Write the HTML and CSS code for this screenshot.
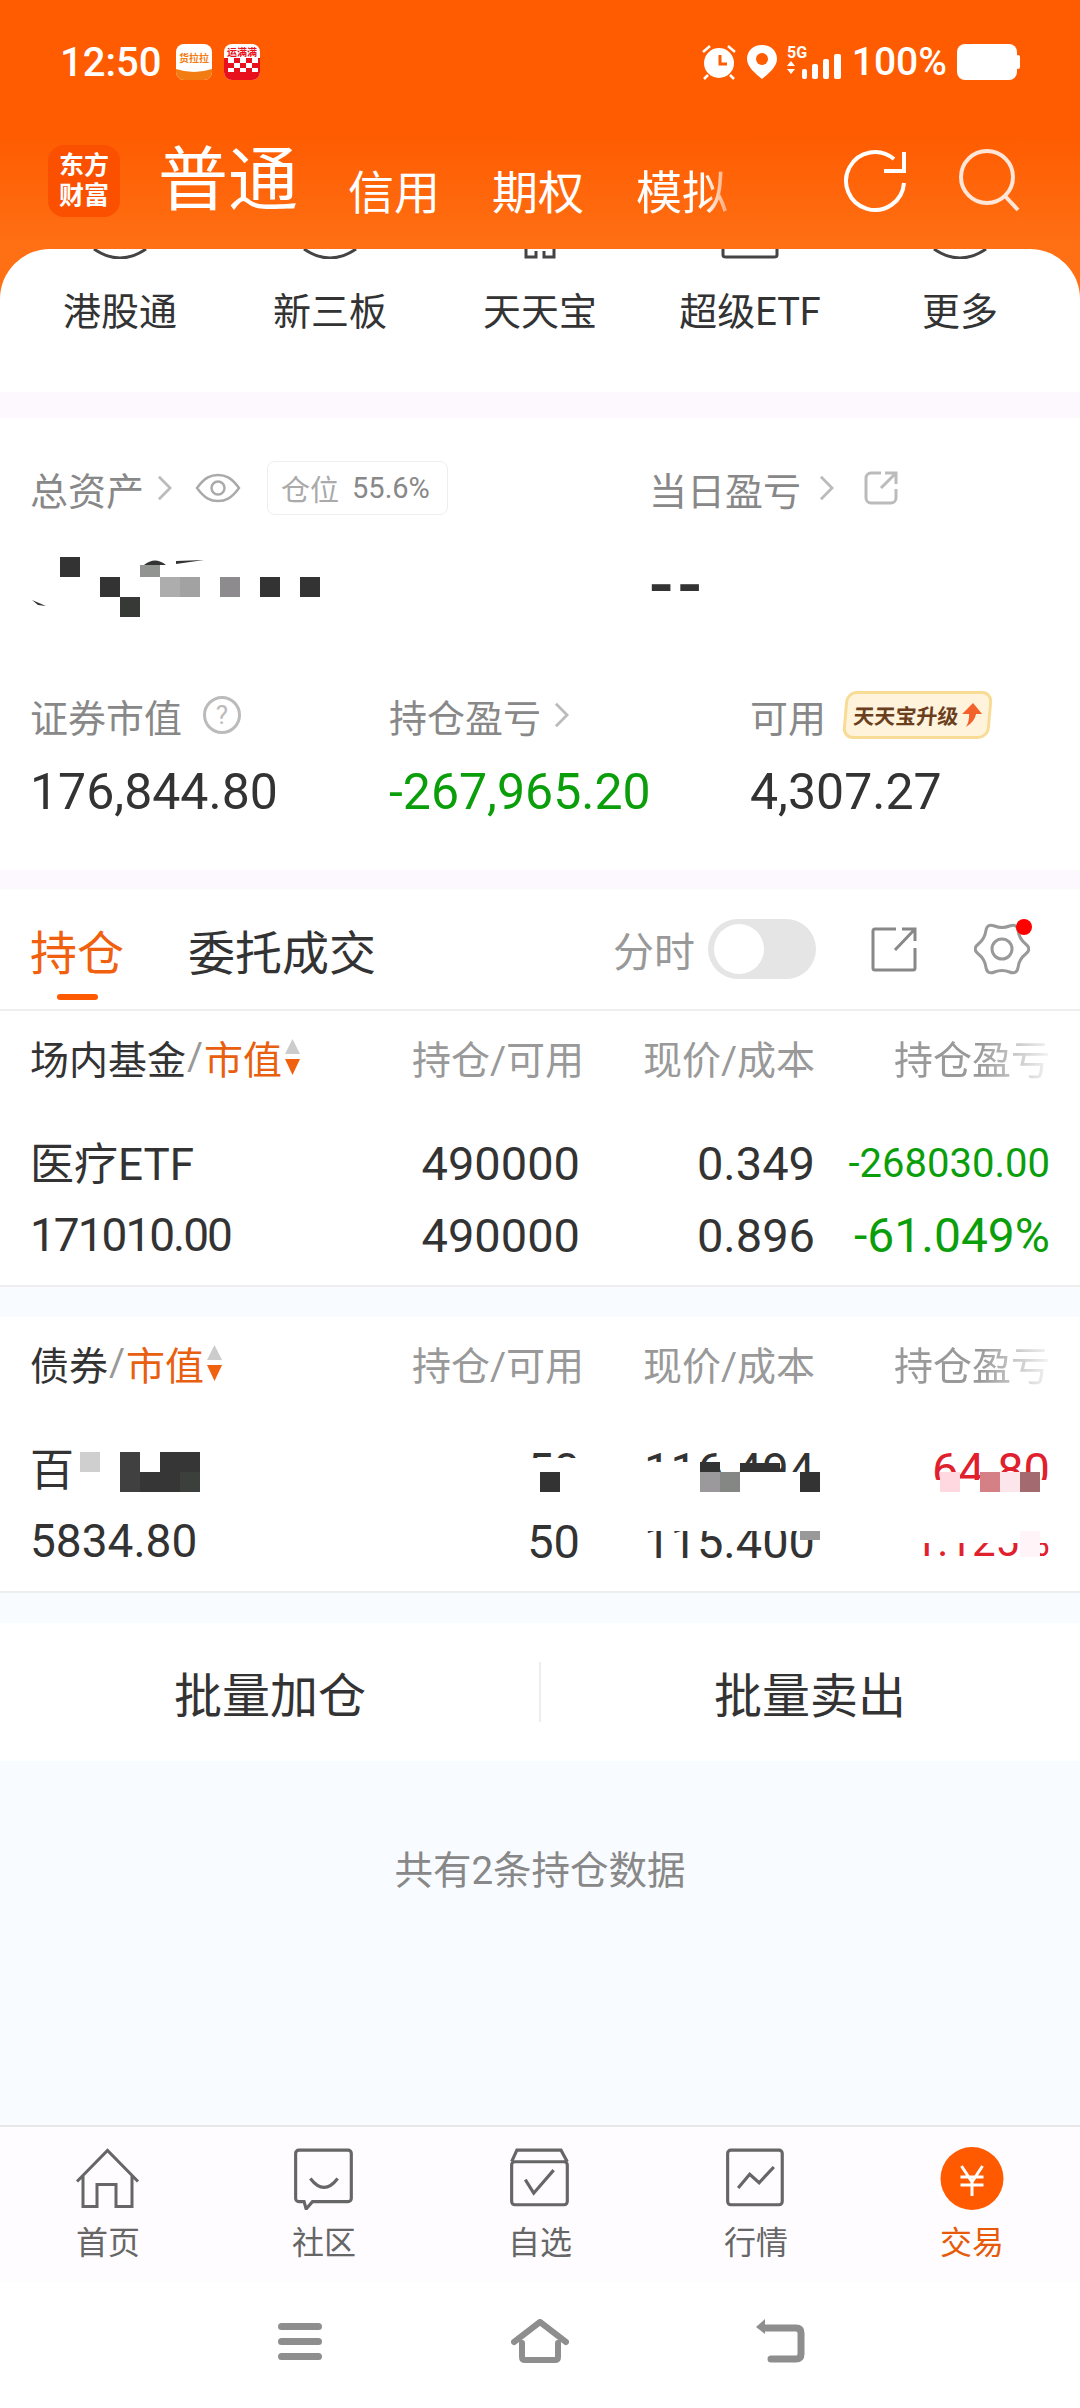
FILE: index.html
```html
<!DOCTYPE html>
<html lang="zh-CN">
<head>
    <meta charset="UTF-8">
    <meta name="viewport" content="width=device-width, initial-scale=1.0">
    <title>交易</title>
    <link rel="stylesheet" href="styles.css">
</head>
<body>
    <svg class="defs" width="0" height="0">
        <symbol id="chevron" viewBox="0 0 16 28"><path d="M2 2 L14 14 L2 26" fill="none" stroke="currentColor" stroke-width="3"/></symbol>
        <symbol id="export" viewBox="0 0 46 46"><path d="M25 3 H4 a2 2 0 0 0 -2 2 V42 a2 2 0 0 0 2 2 H42 a2 2 0 0 0 2 -2 V22 M24 24 L44 3 M31 3 H44 V15" fill="none" stroke="currentColor" stroke-width="3"/></symbol>
        <symbol id="export-round" viewBox="0 0 34 34"><path d="M17 2 H7 a5 5 0 0 0 -5 5 V27 a5 5 0 0 0 5 5 H27 a5 5 0 0 0 5 -5 V18 M17 17 L31 3 M21 2 H32 V13" fill="none" stroke="currentColor" stroke-width="3"/></symbol>
        <symbol id="sort" viewBox="0 0 17 36"><path d="M8.500 0 L16 15 H1 Z" fill="#ccc"/><path d="M1 20 H16 L8.500 36 Z" fill="#f0600f"/></symbol>
    </svg>

    <div class="screen">
        <header class="top">
            <div class="status">
                <span class="clock">12:50</span>
                <svg class="note" viewBox="0 0 36 36">
                    <rect width="36" height="36" rx="8" fill="#fff"/>
                    <path d="M0 25 Q18 31 36 25 V28 a8 8 0 0 1 -8 8 H8 a8 8 0 0 1 -8 -8 Z" fill="#f27c12"/>
                    <text x="18" y="18" class="note-txt" fill="#f27c12">货拉拉</text>
                </svg>
                <svg class="note" viewBox="0 0 36 36">
                    <rect width="36" height="36" rx="8" fill="#fff"/>
                    <path d="M0 14 H36 V28 a8 8 0 0 1 -8 8 H8 a8 8 0 0 1 -8 -8 Z" fill="#e8101c"/>
                    <path d="M4 14 h6 v5 h-6 Z M16 14 h6 v5 h-6 Z M28 14 h6 v5 h-6 Z M10 19 h6 v5 h-6 Z M22 19 h6 v5 h-6 Z M4 24 h6 v4 h-6 Z M16 24 h6 v4 h-6 Z M28 24 h6 v4 h-6 Z" fill="#fff"/>
                    <text x="18" y="12" class="note-txt" fill="#e8101c">运满满</text>
                </svg>
                <div class="status-right">
                    <svg class="st-alarm" viewBox="0 0 36 38">
                        <circle cx="18" cy="20" r="15" fill="#fff"/>
                        <path d="M19 12 V21 H26" fill="none" stroke="#ff5b00" stroke-width="3"/>
                        <path d="M2 9 L9 3 M34 9 L27 3 M7 32 L3 36 M29 32 L33 36" stroke="#fff" stroke-width="2.500"/>
                    </svg>
                    <svg class="st-pin" viewBox="0 0 30 34">
                        <path d="M15 0 C6 0 0 6 0 14 C0 22 9 29 15 34 C21 29 30 22 30 14 C30 6 24 0 15 0 Z" fill="#fff"/>
                        <circle cx="15" cy="14" r="6" fill="#ff5b00"/>
                    </svg>
                    <svg class="st-signal" viewBox="0 0 54 36">
                        <text x="0" y="14" class="st-5g">5G</text>
                        <path d="M4 17 L8 22 H0 Z M0 25 H8 L4 30 Z" fill="#fff"/>
                        <rect x="15" y="25" width="5" height="10" rx="2" fill="#fff"/>
                        <rect x="25" y="20" width="6" height="15" rx="2" fill="#fff"/>
                        <rect x="36" y="15" width="6" height="20" rx="2" fill="#fff"/>
                        <rect x="47" y="10" width="7" height="25" rx="2" fill="#fff"/>
                    </svg>
                    <span class="battery-pct">100%</span>
                    <svg class="st-battery" viewBox="0 0 63 36">
                        <rect width="60" height="36" rx="8" fill="#fff"/>
                        <rect x="59" y="11" width="4" height="14" rx="2" fill="#fff"/>
                    </svg>
                </div>
            </div>

            <nav class="account-tabs">
                <div class="logo">东方<br>财富</div>
                <span class="tab-main">普通</span>
                <span class="tab">信用</span>
                <span class="tab">期权</span>
                <span class="tab tab-fade">模拟</span>
                <div class="top-actions">
                    <svg class="ic-refresh" viewBox="0 0 66 64"><path d="M52 10 A29 29 0 1 0 62 34 M42 22 H62 V3" fill="none" stroke="#fff" stroke-width="4"/></svg>
                    <svg class="ic-search" viewBox="0 0 62 66"><circle cx="29" cy="29" r="26" fill="none" stroke="#ffe6d8" stroke-width="4"/><path d="M47 48 L60 62" stroke="#ffe6d8" stroke-width="4"/></svg>
                </div>
            </nav>

            <div class="shortcuts">
                <div class="shortcut"><svg class="peek" viewBox="0 0 60 10"><path d="M4 0 Q30 18 56 0" fill="none" stroke="#444" stroke-width="3"/></svg><span>港股通</span></div>
                <div class="shortcut"><svg class="peek" viewBox="0 0 60 10"><path d="M4 0 Q30 18 56 0" fill="none" stroke="#444" stroke-width="3"/></svg><span>新三板</span></div>
                <div class="shortcut"><svg class="peek" viewBox="0 0 60 10"><path d="M16 0 V8 H26 V2 M34 2 V8 H44 V0" fill="none" stroke="#444" stroke-width="3"/></svg><span>天天宝</span></div>
                <div class="shortcut"><svg class="peek" viewBox="0 0 60 10"><path d="M3 0 V6 Q3 8 6 8 H54 Q57 8 57 6 V0" fill="none" stroke="#444" stroke-width="3"/></svg><span>超级ETF</span></div>
                <div class="shortcut"><svg class="peek" viewBox="0 0 60 10"><path d="M4 0 Q30 18 56 0" fill="none" stroke="#444" stroke-width="3"/></svg><span>更多</span></div>
            </div>
        </header>

        <div class="strip strip-pink strip-first"></div>

        <section class="assets">
            <div class="assets-top">
                <div>
                    <div class="label-row">
                        <span>总资产</span>
                        <svg class="chev"><use href="#chevron"/></svg>
                        <svg class="ic-eye" viewBox="0 0 46 30">
                            <path d="M2 15 C10 4 16 2 23 2 C30 2 36 4 44 15 C36 26 30 28 23 28 C16 28 10 26 2 15 Z" fill="none" stroke="#aaa" stroke-width="2.500"/>
                            <circle cx="23" cy="15" r="6.500" fill="none" stroke="#aaa" stroke-width="2.500"/>
                        </svg>
                        <div class="pill"><span class="pill-name">仓位</span><span>55.6%</span></div>
                    </div>
                    <svg class="mosaic-total" viewBox="0 0 320 100">
                        <rect x="60" y="7" width="20" height="20" fill="#333"/>
                        <rect x="100" y="27" width="20" height="20" fill="#333"/>
                        <rect x="120" y="47" width="20" height="20" fill="#363936"/>
                        <rect x="140" y="15" width="20" height="12" fill="#929492"/>
                        <rect x="160" y="27" width="20" height="20" fill="#adadad"/>
                        <rect x="180" y="27" width="20" height="20" fill="#a3a2a3"/>
                        <rect x="220" y="27" width="20" height="20" fill="#8d8b8d"/>
                        <rect x="260" y="27" width="20" height="20" fill="#333"/>
                        <rect x="300" y="27" width="20" height="20" fill="#333"/>
                        <path d="M144 15 Q155 6 166 15 Z M176 11 L204 10 L176 14 Z M32 50 L46 56 L38 55 Z" fill="#333"/>
                    </svg>
                </div>
                <div>
                    <div class="label-row">
                        <span>当日盈亏</span>
                        <svg class="chev chev-wide"><use href="#chevron"/></svg>
                        <svg class="ic-export-sm"><use href="#export-round"/></svg>
                    </div>
                    <div class="dash">--</div>
                </div>
            </div>
            <div class="assets-bottom">
                <div>
                    <div class="label-row">
                        <span>证券市值</span>
                        <span class="help">?</span>
                    </div>
                    <div class="big-num">176,844.80</div>
                </div>
                <div>
                    <div class="label-row">
                        <span>持仓盈亏</span>
                        <svg class="chev"><use href="#chevron"/></svg>
                    </div>
                    <div class="big-num down">-267,965.20</div>
                </div>
                <div>
                    <div class="label-row">
                        <span>可用</span>
                        <div class="upgrade">天天宝升级<svg class="upgrade-arrow" viewBox="0 0 20 24"><path d="M10 0 L20 11 H14 Q13 19 5 24 Q8 18 7 11 H0 Z" fill="#f4622b"/></svg></div>
                    </div>
                    <div class="big-num">4,307.27</div>
                </div>
            </div>
        </section>

        <div class="strip strip-pink strip-second"></div>

        <div class="holdings-tabs">
            <span class="h-tab active">持仓</span>
            <span class="h-tab">委托成交</span>
            <div class="h-tools">
                <span class="fenshi">分时</span>
                <div class="toggle"><span class="knob"></span></div>
                <svg class="ic-export"><use href="#export"/></svg>
                <div class="gear">
                    <svg viewBox="0 0 56 56">
                        <path d="M51.650 23 Q58 28 51.650 33 Q45.300 38 44.150 46 Q43 54 35.500 51 Q28 48 20.500 51 Q13 54 11.850 46 Q10.700 38 4.350 33 Q-2 28 4.350 23 Q10.700 18 11.850 10 Q13 2 20.500 5 Q28 8 35.500 5 Q43 2 44.150 10 Q45.300 18 51.650 23 Z" fill="none" stroke="#999" stroke-width="3"/>
                        <circle cx="28" cy="28" r="10" fill="none" stroke="#999" stroke-width="3"/>
                    </svg>
                    <span class="red-dot"></span>
                </div>
            </div>
        </div>

        <section class="table">
            <div class="row head">
                <div class="col-name">场内基金<i>/</i><b>市值</b><svg class="sort"><use href="#sort"/></svg></div>
                <div class="num head-qty">持仓/可用</div>
                <div class="num">现价/成本</div>
                <div class="num head-fade">持仓盈亏</div>
            </div>
            <div class="row">
                <div class="col-name body-name">医疗ETF</div>
                <div class="num">490000</div>
                <div class="num">0.349</div>
                <div class="num down pl-small">-268030.00</div>
            </div>
            <div class="row">
                <div class="col-name mv mv-tight">171010.00</div>
                <div class="num">490000</div>
                <div class="num">0.896</div>
                <div class="num down pl-pct">-61.049%</div>
            </div>
        </section>

        <div class="strip strip-blue"></div>

        <section class="table">
            <div class="row head">
                <div class="col-name">债券<i>/</i><b>市值</b><svg class="sort"><use href="#sort"/></svg></div>
                <div class="num head-qty">持仓/可用</div>
                <div class="num">现价/成本</div>
                <div class="num head-fade">持仓盈亏</div>
            </div>
            <div class="row">
                <div class="col-name body-name">百</div>
                <div class="num">50</div>
                <div class="num">116.494</div>
                <div class="num up">64.80</div>
            </div>
            <div class="row">
                <div class="col-name mv">5834.80</div>
                <div class="num">50</div>
                <div class="num">115.400</div>
                <div class="num up pl-tail">1.125%</div>
            </div>
            <!-- pixelated cover over the second holding, coordinates are page y -->
            <svg class="cover" viewBox="0 1318 1080 276">
                <g fill="#fff">
                    <rect x="520" y="1459" width="70" height="60"/>
                    <rect x="640" y="1463" width="60" height="10"/>
                    <rect x="640" y="1473" width="190" height="59"/>
                    <rect x="900" y="1481" width="170" height="63"/>
                </g>
                <rect x="80" y="1453" width="20" height="20" fill="#cfcfcf"/>
                <rect x="120" y="1453" width="20" height="40" fill="#404040"/>
                <rect x="140" y="1473" width="20" height="20" fill="#363636"/>
                <rect x="160" y="1453" width="40" height="20" fill="#363636"/>
                <rect x="160" y="1473" width="20" height="20" fill="#363636"/>
                <rect x="180" y="1473" width="20" height="20" fill="#3c403c"/>
                <rect x="540" y="1473" width="20" height="20" fill="#333"/>
                <rect x="700" y="1463" width="20" height="10" fill="#333"/>
                <rect x="740" y="1464" width="40" height="9" fill="#333"/>
                <rect x="700" y="1473" width="20" height="20" fill="#9b999b"/>
                <rect x="720" y="1473" width="20" height="20" fill="#858785"/>
                <rect x="800" y="1473" width="20" height="20" fill="#333"/>
                <rect x="940" y="1473" width="20" height="20" fill="#ffd9df"/>
                <rect x="980" y="1473" width="20" height="20" fill="#d58085"/>
                <rect x="1000" y="1473" width="20" height="20" fill="#fde5ec"/>
                <rect x="1020" y="1473" width="20" height="20" fill="#a36a70"/>
                <rect x="800" y="1532" width="20" height="9" fill="#999"/>
                <rect x="1020" y="1532" width="20" height="26" fill="#fff5f8"/>
            </svg>
        </section>

        <div class="strip strip-blue"></div>

        <div class="batch">
            <span>批量加仓</span>
            <span>批量卖出</span>
        </div>

        <div class="total-note">共有2条持仓数据</div>

        <nav class="bottom-nav">
            <div class="nav-item">
                <svg viewBox="0 0 66 60"><path d="M2 33 L32.500 2 L63 33 M8 27 V58 H22 V36 H41 V58 H57 V27" fill="none" stroke="#666" stroke-width="3"/></svg>
                <span>首页</span>
            </div>
            <div class="nav-item">
                <svg viewBox="0 0 62 60"><path d="M7 3 H54 a3 3 0 0 1 3 3 V49 a3 3 0 0 1 -3 3 H20 L14 59 L12 52 H7 a3 3 0 0 1 -3 -3 V6 a3 3 0 0 1 3 -3 Z M18 30 Q31 47 44 30" fill="none" stroke="#666" stroke-width="3"/></svg>
                <span>社区</span>
            </div>
            <div class="nav-item">
                <svg viewBox="0 0 60 60"><path d="M3 14 L8 3 H50 L56 14 M6 14 H53 a3 3 0 0 1 3 3 V52 a3 3 0 0 1 -3 3 H6 a3 3 0 0 1 -3 -3 V17 a3 3 0 0 1 3 -3 Z M16 31 L24 44 L43 22" fill="none" stroke="#666" stroke-width="3"/></svg>
                <span>自选</span>
            </div>
            <div class="nav-item">
                <svg viewBox="0 0 60 60"><path d="M6 3 H52 a3 3 0 0 1 3 3 V52 a3 3 0 0 1 -3 3 H6 a3 3 0 0 1 -3 -3 V6 a3 3 0 0 1 3 -3 Z M13 39 L24 26 L33 34 L47 19" fill="none" stroke="#666" stroke-width="3"/></svg>
                <span>行情</span>
            </div>
            <div class="nav-item active">
                <svg viewBox="0 0 63 63"><circle cx="31.500" cy="31.500" r="31.500" fill="#ff5a00"/><path d="M21 19 L31.500 35 L42 19 M20 30 H43 M20 38 H43 M31.500 35 V49" fill="none" stroke="#fff" stroke-width="3"/></svg>
                <span>交易</span>
            </div>
        </nav>

        <div class="gesture">
            <svg class="g-menu" viewBox="0 0 44 37"><path d="M3.500 3.500 H40.500 M3.500 18.500 H40.500 M3.500 33.500 H40.500" stroke="#8e8e8e" stroke-width="7" stroke-linecap="round"/></svg>
            <svg class="g-home" viewBox="0 0 58 44"><path d="M3 23 L29 3 L55 23 M11 24 V38 Q11 41 14 41 H44 Q47 41 47 38 V24" fill="none" stroke="#8e8e8e" stroke-width="6" stroke-linejoin="round" stroke-linecap="round"/></svg>
            <svg class="g-back" viewBox="0 0 50 44"><path d="M8 9 H40 Q45 9 45 14 V35 Q45 40 40 40 H15" fill="none" stroke="#8e8e8e" stroke-width="7" stroke-linecap="round"/><path d="M9 0 L0 8 L9 15 Z" fill="#8e8e8e"/></svg>
        </div>
    </div>
</body>
</html>
```

FILE: styles.css
```css
* {
    box-sizing: border-box;
}

html, body {
    margin: 0;
    padding: 0;
}

body {
    width: 1080px;
    height: 2408px;
    overflow: hidden;
    font-family: Roboto, "Noto Sans CJK SC", sans-serif;
    color: #333;
    background-color: #fff;
}

.defs {
    position: absolute;
}

.screen {
    display: flex;
    flex-direction: column;
    height: 2408px;
}

/* orange header */
.top {
    background: linear-gradient(#ff5b00 0, #ff5b00 130px, #ff7015 250px);
    height: 392px;
    display: flex;
    flex-direction: column;
}

.status {
    height: 124px;
    display: flex;
    align-items: center;
    padding: 0 60px;
    color: #fff;
}

.clock {
    font-size: 40px;
    font-weight: 500;
    margin-right: 15px;
}

.note {
    width: 36px;
    height: 36px;
    margin-right: 12px;
    overflow: visible;
}

.note-txt {
    font-size: 10px;
    font-weight: 700;
    text-anchor: middle;
    font-family: "Noto Sans CJK SC", sans-serif;
}

.status-right {
    margin-left: auto;
    display: flex;
    align-items: center;
}

.st-alarm {
    width: 36px;
    height: 38px;
    margin-right: 10px;
}

.st-pin {
    width: 30px;
    height: 34px;
    margin-right: 10px;
}

.st-signal {
    width: 54px;
    height: 36px;
    margin-right: 11px;
    overflow: visible;
}

.st-5g {
    font-size: 16px;
    font-weight: 700;
    fill: #fff;
}

.battery-pct {
    font-size: 39px;
    font-weight: 500;
    margin-right: 10px;
}

.st-battery {
    width: 63px;
    height: 36px;
}

.account-tabs {
    height: 114px;
    display: flex;
    align-items: center;
    padding: 0 60px 0 48px;
    color: #fff;
}

.logo {
    width: 72px;
    height: 72px;
    border-radius: 16px;
    background-color: #fb5000;
    font-size: 25px;
    font-weight: 700;
    line-height: 30px;
    text-align: center;
    padding-top: 6px;
    margin-right: 38px;
}

.tab-main {
    font-size: 70px;
    line-height: 80px;
    margin-right: 50px;
}

.tab {
    font-size: 46px;
    line-height: 54px;
    margin-top: 24px;
    margin-right: 52px;
}

.tab-fade {
    margin-right: 0;
    -webkit-mask-image: linear-gradient(to right, #000 75%, rgba(0, 0, 0, 0.4) 100%);
    mask-image: linear-gradient(to right, #000 75%, rgba(0, 0, 0, 0.4) 100%);
}

.top-actions {
    margin-left: auto;
    display: flex;
    align-items: center;
    gap: 50px;
}

.ic-refresh {
    width: 66px;
    height: 64px;
}

.ic-search {
    width: 62px;
    height: 66px;
}

/* shortcut row, icons are scrolled away under the header */
.shortcuts {
    margin-top: 11px;
    height: 143px;
    background-color: #fff;
    border-radius: 50px 50px 0 0;
    display: grid;
    grid-template-columns: repeat(5, 210px);
    padding: 0 15px;
}

.shortcut {
    display: flex;
    flex-direction: column;
    align-items: center;
    color: #333;
    font-size: 38px;
    line-height: 50px;
}

.peek {
    width: 60px;
    height: 10px;
    margin-bottom: 28px;
}

.strip {
    flex: none;
}

.strip-pink {
    background-color: #fdf8fd;
}

.strip-first {
    height: 26px;
}

.strip-second {
    height: 19px;
}

.strip-blue {
    height: 30px;
    background-color: #f8fbff;
}

/* asset summary */
.assets {
    height: 452px;
    padding: 40px 0 0 30px;
    background-color: #fff;
}

.assets-top {
    display: grid;
    grid-template-columns: 619px 1fr;
    height: 227px;
}

.assets-bottom {
    display: grid;
    grid-template-columns: 359px 361px 1fr;
}

.label-row {
    height: 60px;
    display: flex;
    align-items: center;
    font-size: 38px;
    color: #888;
}

.chev {
    width: 15px;
    height: 26px;
    margin-left: 13px;
    color: #bbb;
}

.chev-wide {
    margin-left: 18px;
}

.ic-eye {
    width: 46px;
    height: 30px;
    margin-left: 23px;
}

.pill {
    margin-left: 26px;
    width: 181px;
    height: 54px;
    border: 1px solid #eee;
    border-radius: 8px;
    display: flex;
    align-items: center;
    gap: 13px;
    padding-left: 13px;
    font-size: 29px;
    color: #888;
}

.pill-name {
    color: #aaa;
}

.ic-export-sm {
    width: 34px;
    height: 34px;
    margin-left: 30px;
    color: #bbb;
}

.mosaic-total {
    display: block;
    width: 320px;
    height: 100px;
    margin: 32px 0 0 -30px;
}

.dash {
    font-size: 72px;
    font-weight: 500;
    letter-spacing: 4px;
    line-height: 80px;
    margin-top: 28px;
}

.help {
    width: 38px;
    height: 38px;
    margin-left: 21px;
    border: 3px solid #bbb;
    border-radius: 50%;
    color: #bbb;
    font-size: 26px;
    line-height: 32px;
    text-align: center;
}

.upgrade {
    margin-left: 18px;
    width: 147px;
    height: 48px;
    border: 3px solid #f8dc96;
    border-radius: 11px;
    background-color: #fff3dc;
    color: #6b3f1e;
    font-size: 21px;
    font-weight: 700;
    display: flex;
    align-items: center;
    justify-content: center;
    gap: 3px;
    transform: skewX(-5deg);
}

.upgrade-arrow {
    width: 20px;
    height: 24px;
}

.big-num {
    font-size: 50px;
    line-height: 70px;
    margin-top: 12px;
    color: #333;
}

.down {
    color: #0b9e0b;
}

.up {
    color: #e0202c;
}

/* holdings tabs */
.holdings-tabs {
    height: 122px;
    display: flex;
    align-items: center;
    padding: 0 50px 0 30px;
    border-bottom: 2px solid #eee;
    background-color: #fff;
}

.h-tab {
    font-size: 47px;
    margin-right: 64px;
    position: relative;
    margin-top: 1px;
}

.h-tab.active {
    color: #f0600f;
}

.h-tab.active::after {
    content: "";
    position: absolute;
    left: 27px;
    top: 79px;
    width: 41px;
    height: 6px;
    border-radius: 3px;
    background-color: #ff5a00;
}

.h-tools {
    margin-left: auto;
    display: flex;
    align-items: center;
}

.fenshi {
    font-size: 41px;
    color: #999;
    margin-right: 13px;
}

.toggle {
    width: 108px;
    height: 60px;
    border-radius: 30px;
    background-color: #e5e5e5;
    padding: 5px 6px;
    margin-right: 55px;
}

.knob {
    display: block;
    width: 50px;
    height: 50px;
    border-radius: 50%;
    background-color: #fff;
}

.ic-export {
    width: 46px;
    height: 46px;
    color: #888;
    margin-right: 57px;
}

.gear {
    position: relative;
    width: 56px;
    height: 56px;
}

.gear svg {
    display: block;
}

.red-dot {
    position: absolute;
    top: -2px;
    right: -2px;
    width: 16px;
    height: 16px;
    border-radius: 50%;
    background-color: #f00;
}

/* holdings table */
.table {
    position: relative;
    height: 276px;
    padding-bottom: 16px;
    background-color: #fff;
    border-bottom: 2px solid #eee;
}

.row {
    display: grid;
    grid-template-columns: 382px 168px 235px 235px;
    align-items: center;
    height: 72px;
    padding-left: 30px;
    font-size: 47px;
    color: #333;
}

.row.head {
    height: 98px;
    padding-bottom: 6px;
    margin-bottom: 18px;
    font-size: 39px;
    color: #999;
}

.col-name {
    color: #333;
    display: flex;
    align-items: center;
}

.col-name i {
    font-style: normal;
    color: #999;
    margin: 0 1px;
}

.col-name b {
    font-weight: 400;
    color: #e8600f;
}

.sort {
    width: 17px;
    height: 36px;
    margin-left: 2px;
}

.body-name {
    font-size: 44px;
    padding-bottom: 4px;
}

.mv {
    font-size: 46px;
}

.mv-tight {
    letter-spacing: -2px;
}

.num {
    text-align: right;
    white-space: nowrap;
}

.head-qty {
    padding-right: 3px;
}

.pl-small {
    font-size: 40px;
}

.pl-pct {
    font-size: 48px;
}

.pl-tail {
    font-size: 42px;
}

.head-fade {
    -webkit-mask-image: linear-gradient(to right, #000 70%, rgba(0, 0, 0, 0.1) 100%);
    mask-image: linear-gradient(to right, #000 70%, rgba(0, 0, 0, 0.1) 100%);
}

.cover {
    position: absolute;
    left: 0;
    top: 0;
    width: 1080px;
    height: 276px;
}

.batch {
    height: 138px;
    display: grid;
    grid-template-columns: 1fr 1fr;
    align-items: center;
    justify-items: center;
    font-size: 48px;
    background-color: #fff;
    background-image: linear-gradient(#eee, #eee);
    background-size: 2px 60px;
    background-position: center;
    background-repeat: no-repeat;
}

.total-note {
    flex: 1;
    background-color: #f8fbff;
    text-align: center;
    font-size: 38.500px;
    color: #888;
    padding-top: 78px;
}

.bottom-nav {
    height: 157px;
    display: grid;
    grid-template-columns: repeat(5, 216px);
    border-top: 2px solid #e8e8e8;
    background-color: #fefcff;
}

.nav-item {
    display: flex;
    flex-direction: column;
    align-items: center;
    padding-top: 20px;
    font-size: 32px;
    color: #666;
}

.nav-item svg {
    display: block;
    height: 63px;
    width: 66px;
}

.nav-item span {
    line-height: 44px;
    margin-top: 11px;
}

.nav-item.active {
    color: #e65a0a;
}

.gesture {
    height: 126px;
    background-color: #fff;
    display: flex;
    align-items: center;
    padding-left: 278px;
    padding-bottom: 8px;
}

.g-menu {
    width: 44px;
    height: 37px;
    margin-right: 189px;
}

.g-home {
    width: 58px;
    height: 44px;
    margin-right: 187px;
}

.g-back {
    width: 50px;
    height: 44px;
}
```
